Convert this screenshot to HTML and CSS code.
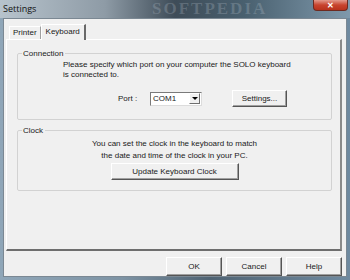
FILE: index.html
```html
<!DOCTYPE html>
<html lang="en">
<head>
    <meta charset="UTF-8">
    <title>Settings</title>
    <link rel="stylesheet" href="styles.css">
</head>
<body>
    <div class="window">
        <div class="titlebar">
            <span class="title">Settings</span>
            <span class="watermark">SOFTPEDIA</span>
            <span class="close">&#x2715;</span>
        </div>
        <div class="client">
            <div class="tabs">
                <div class="tab">Printer</div>
                <div class="tab active">Keyboard</div>
            </div>
            <div class="panel">
                <fieldset class="group">
                    <legend>Connection</legend>
                    <p class="intro">Please specify which port on your computer the SOLO keyboard<br>is connected to.</p>
                    <div class="port-row">
                        <label for="port">Port :</label>
                        <div class="combo" id="port">
                            <span class="combo-value">COM1</span>
                            <span class="combo-arrow"></span>
                        </div>
                        <button class="btn settings-btn">Settings...</button>
                    </div>
                </fieldset>
                <fieldset class="group clock">
                    <legend>Clock</legend>
                    <div class="clock-body">
                        <p class="clock-text">You can set the clock in the keyboard to match<br>the date and time of the clock in your PC.</p>
                        <button class="btn update-btn">Update Keyboard Clock</button>
                    </div>
                </fieldset>
            </div>
            <div class="actions">
                <button class="btn">OK</button>
                <button class="btn">Cancel</button>
                <button class="btn">Help</button>
            </div>
        </div>
    </div>
</body>
</html>
```

FILE: styles.css
```css
body {
    margin: 0;
    padding: 0;
    width: 350px;
    height: 280px;
    overflow: hidden;
    font-family: 'Liberation Sans', Arial, sans-serif;
    font-size: 8px;
    color: #1a1a1a;
}

.window {
    height: 280px;
    display: flex;
    flex-direction: column;
    background: linear-gradient(90deg, #8fa6b8 0%, #7d93a4 35%, #4f6373 60%, #6f8aa0 100%);
}

.titlebar {
    height: 18px;
    display: flex;
    align-items: flex-start;
    position: relative;
    overflow: hidden;
    background: linear-gradient(90deg, #b7c3cc 0%, #8e9ba6 30%, #3e4c58 50%, #49606f 70%, #7f99ac 100%);
}

.title {
    font-family: 'Open Sans', 'Liberation Sans', sans-serif;
    font-size: 9px;
    line-height: 9px;
    margin: 4px 0 0 3px;
    color: #111;
}

.watermark {
    position: absolute;
    left: 152px;
    top: 0;
    font-family: 'Liberation Serif', serif;
    font-size: 17px;
    line-height: 17px;
    font-weight: bold;
    letter-spacing: 2px;
    color: rgba(190, 200, 210, 0.25);
}

.close {
    margin-left: auto;
    margin-right: 2px;
    width: 35px;
    height: 11px;
    line-height: 11px;
    text-align: center;
    font-size: 8px;
    font-weight: bold;
    color: #fff;
    background: linear-gradient(#e39a8c, #c8442e 50%, #b8321c);
    border: 1px solid #6d2a20;
    border-top: none;
    border-radius: 0 0 4px 4px;
    box-sizing: border-box;
}

.client {
    flex: 1;
    margin: 0 3px 3px 3px;
    background-color: #f0f0f0;
    border: 1px solid #7b8893;
    display: flex;
    flex-direction: column;
    padding: 3px 4px 0 2px;
}

.tabs {
    display: flex;
    align-items: flex-end;
    height: 17px;
    padding-left: 3px;
}

.tab {
    height: 12px;
    line-height: 12px;
    padding: 0 3px;
    border: 1px solid #fff;
    border-right-color: #a0a0a0;
    border-bottom: none;
}

.tab.active {
    height: 15px;
    line-height: 14px;
    padding: 0 4px;
    border-right: 2px solid #696969;
    position: relative;
    z-index: 1;
    margin-bottom: -1px;
    background-color: #f0f0f0;
}

.panel {
    height: 212px;
    box-sizing: border-box;
    border: 1px solid #fff;
    border-right: 2px solid #8a8a8a;
    border-bottom: 2px solid #6e6e6e;
    padding: 9px 8px 0 10px;
}

.group {
    margin: 0;
    padding: 0;
    border: 1px solid #d2d2d2;
    border-radius: 2px;
    height: 71px;
    box-sizing: border-box;
}

.group legend {
    padding: 0 2px 0 1px;
    margin-left: 4px;
    line-height: 9px;
}

.intro {
    margin: 2px 0 0 45px;
    line-height: 10px;
}

.port-row {
    display: flex;
    align-items: center;
    margin-top: 10px;
    padding-left: 100px;
}

.port-row label {
    width: 32px;
}

.combo {
    width: 52px;
    height: 14px;
    box-sizing: border-box;
    border: 1px solid #7a7a7a;
    border-right-color: #dcdcdc;
    border-bottom-color: #dcdcdc;
    background-color: #fff;
    display: flex;
    align-items: center;
    padding-left: 2px;
}

.combo-value {
    flex: 1;
}

.combo-arrow {
    width: 11px;
    height: 11px;
    margin-right: 1px;
    box-sizing: border-box;
    background: #f0f0f0;
    border: 1px solid #fff;
    border-right-color: #6e6e6e;
    border-bottom-color: #6e6e6e;
    position: relative;
}

.combo-arrow::after {
    content: "";
    position: absolute;
    left: 2px;
    top: 3px;
    border-left: 3px solid transparent;
    border-right: 3px solid transparent;
    border-top: 3px solid #000;
}

.btn {
    font-family: 'Liberation Sans', Arial, sans-serif;
    font-size: 8px;
    color: #1a1a1a;
    background-color: #f0f0f0;
    border: 1px solid #fff;
    border-right-color: #555;
    border-bottom-color: #555;
    box-shadow: inset -1px -1px 0 #a0a0a0;
    padding: 0;
    box-sizing: border-box;
}

.settings-btn {
    width: 55px;
    height: 17px;
    margin-left: 30px;
}

.clock {
    margin-top: 6px;
    height: 65px;
}

.clock-body {
    text-align: center;
}

.clock-text {
    margin: 3px 0 0 0;
    line-height: 12px;
}

.update-btn {
    width: 128px;
    height: 17px;
    margin-top: 1px;
}

.actions {
    display: flex;
    justify-content: flex-end;
    gap: 4px;
    margin-top: 6px;
}

.actions .btn {
    width: 56px;
    height: 19px;
}
```
